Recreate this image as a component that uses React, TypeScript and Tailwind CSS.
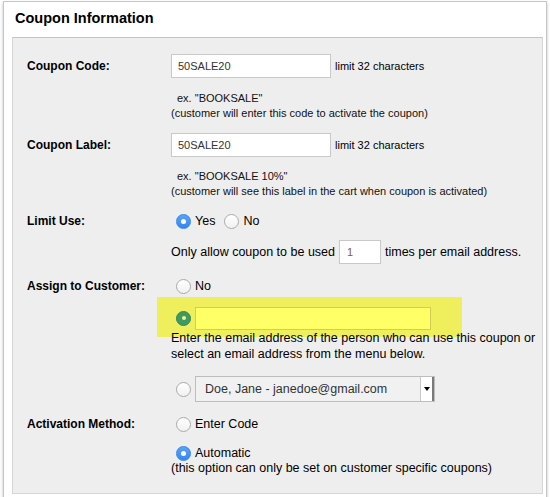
import React from "react";

const font = { fontFamily: '"Liberation Sans", Arial, Helvetica, sans-serif' };

function Radio({ checked = false, green = false }: { checked?: boolean; green?: boolean }) {
  if (green) {
    return (
      <span className="flex h-[15px] w-[15px] shrink-0 items-center justify-center rounded-full border border-[#2f8a55] bg-[#3d9a62]">
        <span className="h-[4px] w-[4px] rounded-full bg-[#f4f28a]" />
      </span>
    );
  }
  if (checked) {
    return (
      <span className="flex h-[15px] w-[15px] shrink-0 items-center justify-center rounded-full border border-[#3a84e6] bg-gradient-to-b from-[#5aa2f7] to-[#3586ef]">
        <span className="h-[5px] w-[5px] rounded-full bg-white" />
      </span>
    );
  }
  return (
    <span className="h-[15px] w-[15px] shrink-0 rounded-full border border-[#aaaaaa] bg-gradient-to-b from-white to-[#f1f1f1]" />
  );
}

function Label({ children }: { children: React.ReactNode }) {
  return <div className="w-[144px] shrink-0 text-[12px] font-bold text-black">{children}</div>;
}

function TextBox({ value, w }: { value: string; w: string }) {
  return (
    <div className={`flex h-[24px] items-center border border-[#c9c9c9] bg-white pl-[6px] text-[11px] text-[#333] ${w}`}>
      {value}
    </div>
  );
}

export default function App() {
  return (
    <div className="h-[497px] w-[550px] bg-white pt-[1px] pl-[3px]" style={font}>
      <div className="w-[544px] border border-[#c6c6c6] bg-white shadow-[0_2px_3px_rgba(0,0,0,0.25)]">
        <div className="flex h-[35px] items-center pl-[11px] pb-[2px] text-[14.5px] font-bold text-black">
          Coupon Information
        </div>

        <div className="mb-[5px] ml-[8px] mr-[3px] border border-[#d6d6d6] border-t-[#c4c4c4] bg-[#eeeeee] pb-[17px] pl-[14px] pt-[16px] text-[12.5px] text-black">
          {/* coupon code */}
          <div className="flex h-[24px] items-center">
            <Label>Coupon Code:</Label>
            <TextBox value="50SALE20" w="w-[160px]" />
            <span className="ml-[4px] text-[11px]">limit 32 characters</span>
          </div>
          <div className="mt-[13px] pl-[144px] text-[11px] leading-[15px] text-[#111]">
            <div className="pl-[6px]">ex. "BOOKSALE"</div>
            <div>(customer will enter this code to activate the coupon)</div>
          </div>

          {/* coupon label */}
          <div className="mt-[12px] flex h-[24px] items-center">
            <Label>Coupon Label:</Label>
            <TextBox value="50SALE20" w="w-[160px]" />
            <span className="ml-[4px] text-[11px]">limit 32 characters</span>
          </div>
          <div className="mt-[12px] pl-[144px] text-[11px] leading-[15px] text-[#111]">
            <div className="pl-[6px]">ex. "BOOKSALE 10%"</div>
            <div>(customer will see this label in the cart when coupon is activated)</div>
          </div>

          {/* limit use */}
          <div className="mt-[12px] flex h-[20px] items-center">
            <Label>Limit Use:</Label>
            <div className="ml-[5px] flex items-center gap-[4px]">
              <Radio checked />
              <span>Yes</span>
            </div>
            <div className="ml-[9px] flex items-center gap-[4px]">
              <Radio />
              <span>No</span>
            </div>
          </div>
          <div className="mt-[9px] flex h-[24px] items-center pl-[144px]">
            <span>Only allow coupon to be used</span>
            <div className="ml-[4px] flex h-[24px] w-[42px] items-center border border-[#c9c9c9] bg-white pl-[7px] text-[11px] text-[#8a5a2c]">
              1
            </div>
            <span className="ml-[4px]">times per email address.</span>
          </div>

          {/* assign to customer */}
          <div className="mt-[12px] flex h-[20px] items-center">
            <Label>Assign to Customer:</Label>
            <div className="ml-[5px] flex items-center gap-[4px]">
              <Radio />
              <span>No</span>
            </div>
          </div>
          <div className="relative mt-[10px] ml-[144px] flex h-[24px] items-center">
            <div className="absolute left-[-14px] top-[-9px] h-[40px] w-[305px] bg-[#efee5c]" />
            <div className="relative ml-[5px] flex items-center gap-[4px]">
              <Radio green />
              <div className="h-[23px] w-[236px] border border-[#d3cd55] bg-[#ffff66]" />
            </div>
          </div>
          <div className="relative whitespace-nowrap pl-[144px] leading-[16px]">
            Enter the email address of the person who can use this coupon or
            <br />
            select an email address from the menu below.
          </div>
          <div className="mt-[14px] ml-[144px] flex h-[26px] items-center">
            <div className="ml-[5px] flex items-center gap-[4px]">
              <Radio />
              <div className="flex h-[26px] w-[240px] items-stretch border border-[#bdbdbd] bg-[#f1f1f1]">
                <div className="flex flex-1 items-center pl-[9px] text-[12.5px] text-[#333]">
                  Doe, Jane - janedoe@gmail.com
                </div>
                <div className="flex w-[14px] items-center justify-center border-l border-l-[#c8c8c8] border-r-2 border-r-[#7a7a7a] bg-white">
                  <span className="h-0 w-0 border-x-[3px] border-t-[4px] border-x-transparent border-t-black" />
                </div>
              </div>
            </div>
          </div>

          {/* activation method */}
          <div className="mt-[12px] flex h-[20px] items-center">
            <Label>Activation Method:</Label>
            <div className="ml-[5px] flex items-center gap-[4px]">
              <Radio />
              <span>Enter Code</span>
            </div>
          </div>
          <div className="mt-[9px] ml-[149px] flex h-[20px] items-center gap-[4px]">
            <Radio checked />
            <span>Automatic</span>
          </div>
          <div className="mt-[-2px] pl-[144px] leading-[15px]">
            (this option can only be set on customer specific coupons)
          </div>
        </div>
      </div>
    </div>
  );
}
